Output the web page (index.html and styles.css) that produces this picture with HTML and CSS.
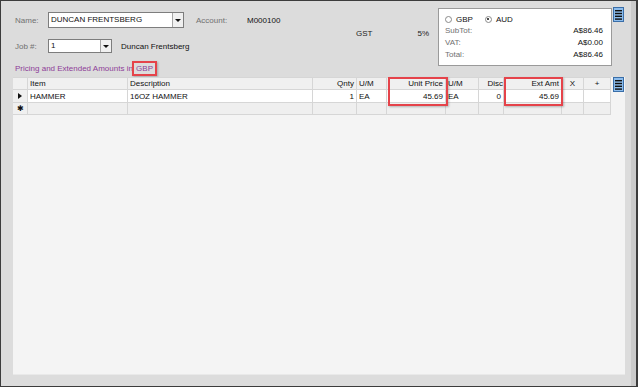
FILE: index.html
```html
<!DOCTYPE html>
<html lang="en">
<head>
  <meta charset="UTF-8">
  <title>Sales Order</title>
  <link rel="stylesheet" href="styles.css">
</head>
<body>
  <div class="window">

    <!-- Header fields and totals -->
    <div class="top">
      <div class="form">
        <div class="form-row name-row">
          <span class="label">Name:</span>
          <div class="combo name-combo">
            <span class="combo-text">DUNCAN FRENTSBERG</span>
            <span class="combo-btn"><span class="arrow"></span></span>
          </div>
          <span class="label account-label">Account:</span>
          <span class="value">M000100</span>
        </div>
        <div class="form-row job-row">
          <span class="label">Job #:</span>
          <div class="combo job-combo">
            <span class="combo-text">1</span>
            <span class="combo-btn"><span class="arrow"></span></span>
          </div>
          <span class="value job-name">Duncan Frentsberg</span>
        </div>
        <div class="caption">Pricing and Extended Amounts in <span class="mark">GBP</span></div>
      </div>

      <div class="tax">
        <span>GST</span>
        <span>5%</span>
      </div>

      <div class="totals">
        <div class="currency">
          <span class="radio"></span><span class="radio-label">GBP</span>
          <span class="radio checked"></span><span class="radio-label">AUD</span>
        </div>
        <div class="total-row"><span class="label">SubTot:</span><span>A$86.46</span></div>
        <div class="total-row"><span class="label">VAT:</span><span>A$0.00</span></div>
        <div class="total-row"><span class="label">Total:</span><span>A$86.46</span></div>
      </div>

      <svg class="menu-btn top-menu" width="11" height="15" viewBox="0 0 11 15">
        <rect x="0.5" y="0.5" width="10" height="14" fill="#8cbcec" stroke="#3a6ea8"/>
        <rect x="2" y="3" width="7" height="1.4" fill="#111"/>
        <rect x="2" y="5.8" width="7" height="1.4" fill="#111"/>
        <rect x="2" y="8.6" width="7" height="1.4" fill="#111"/>
        <rect x="2" y="11.4" width="7" height="1.4" fill="#111"/>
      </svg>
    </div>

    <!-- Line items -->
    <div class="grid-area">
      <div class="grid">
        <div class="cell head rowhead"></div>
        <div class="cell head">Item</div>
        <div class="cell head">Description</div>
        <div class="cell head num">Qnty</div>
        <div class="cell head">U/M</div>
        <div class="cell head num">Unit Price</div>
        <div class="cell head">U/M</div>
        <div class="cell head num clip">Disc</div>
        <div class="cell head num">Ext Amt</div>
        <div class="cell head center">X</div>
        <div class="cell head center">+</div>

        <div class="cell rowhead"><span class="current"></span></div>
        <div class="cell data">HAMMER</div>
        <div class="cell data">16OZ HAMMER</div>
        <div class="cell data num">1</div>
        <div class="cell data">EA</div>
        <div class="cell data num">45.69</div>
        <div class="cell data">EA</div>
        <div class="cell data num">0</div>
        <div class="cell data num">45.69</div>
        <div class="cell data"></div>
        <div class="cell data"></div>

        <div class="cell rowhead newrow-mark">&#x2731;</div>
        <div class="cell newrow"></div>
        <div class="cell newrow"></div>
        <div class="cell newrow"></div>
        <div class="cell newrow"></div>
        <div class="cell newrow"></div>
        <div class="cell newrow"></div>
        <div class="cell newrow"></div>
        <div class="cell newrow"></div>
        <div class="cell newrow"></div>
        <div class="cell newrow"></div>

        <!-- annotation boxes over the price columns -->
        <div class="highlight unit-price-mark"></div>
        <div class="highlight ext-amt-mark"></div>
      </div>

      <svg class="menu-btn grid-menu" width="11" height="15" viewBox="0 0 11 15">
        <rect x="0.5" y="0.5" width="10" height="14" fill="#8cbcec" stroke="#3a6ea8"/>
        <rect x="2" y="3" width="7" height="1.4" fill="#111"/>
        <rect x="2" y="5.8" width="7" height="1.4" fill="#111"/>
        <rect x="2" y="8.6" width="7" height="1.4" fill="#111"/>
        <rect x="2" y="11.4" width="7" height="1.4" fill="#111"/>
      </svg>
    </div>
  </div>
</body>
</html>
```

FILE: styles.css
```css
body {
  margin: 0;
  font-family: "Liberation Sans", Arial, sans-serif;
  font-size: 8px;
  color: #111;
}

.window {
  width: 638px;
  height: 387px;
  box-sizing: border-box;
  border: 1px solid #3c3c3c;
  border-right-width: 2px;
  background: #dcdcdc;
  box-shadow: inset -5px 0 0 #cbcbcb;
}

/* Top area */
.top {
  display: flex;
  height: 76px;
}

.form {
  width: 340px;
  padding-left: 14px;
  padding-top: 11px;
  box-sizing: border-box;
}

.form-row {
  display: flex;
  align-items: center;
}

.name-row {
  height: 16px;
}

.job-row {
  height: 14px;
  margin-top: 11px;
}

.label {
  color: #707070;
}

.form-row > .label:first-child {
  width: 33px;
}

.combo {
  display: flex;
  box-sizing: border-box;
  height: 100%;
  border: 1px solid #7d7d7d;
  background: #fff;
}

.name-combo {
  width: 136px;
}

.job-combo {
  width: 64px;
}

.combo-text {
  flex: 1;
  padding-left: 2px;
  line-height: 13px;
}

.job-combo .combo-text {
  line-height: 11px;
}

.combo-btn {
  width: 10px;
  border-left: 1px solid #a6a6a6;
  background: #f0f0f0;
  display: flex;
  align-items: center;
  justify-content: center;
}

.arrow {
  width: 0;
  height: 0;
  border-left: 3px solid transparent;
  border-right: 3px solid transparent;
  border-top: 3px solid #111;
}

.account-label {
  margin-left: 12px;
  width: 51px;
}

.job-name {
  margin-left: 9px;
}

.caption {
  margin-top: 8px;
  height: 14px;
  line-height: 14px;
  color: #8e3c98;
}

.mark {
  display: inline-block;
  box-sizing: border-box;
  height: 15px;
  line-height: 11px;
  padding: 0 2px 0 2px;
  margin-left: -3px;
  border: 2px solid #e5434a;
  box-shadow: 1px 1px 2px rgba(0, 0, 0, 0.25);
}

.tax {
  display: flex;
  justify-content: space-between;
  width: 73px;
  margin-left: 15px;
  margin-right: 9px;
  padding-top: 28px;
  color: #222;
}

.totals {
  width: 174px;
  height: 58px;
  margin-top: 7px;
  box-sizing: border-box;
  border: 1px solid #9a9a9a;
  background: #fff;
  padding: 4px 8px 0 6px;
}

.currency {
  display: flex;
  align-items: center;
  height: 12px;
}

.radio {
  width: 7px;
  height: 7px;
  box-sizing: border-box;
  border: 1px solid #8a8a8a;
  border-radius: 50%;
  background: #fff;
  position: relative;
}

.radio.checked::after {
  content: "";
  position: absolute;
  left: 1.5px;
  top: 1.5px;
  width: 2px;
  height: 2px;
  border-radius: 50%;
  background: #111;
}

.radio-label {
  margin-left: 4px;
  margin-right: 12px;
}

.total-row {
  display: flex;
  justify-content: space-between;
  height: 12px;
  line-height: 12px;
}

.menu-btn {
  display: block;
}

.top-menu {
  margin-top: 6px;
  margin-left: 1px;
}

/* Grid area */
.grid-area {
  display: flex;
  align-items: flex-start;
  margin: 0 11px 0 12px;
  height: 297px;
  background: #f4f4f4;
  border-bottom: 1px solid #e9e9e9;
}

.grid {
  position: relative;
  display: grid;
  grid-template-columns: 15px 100px 185px 44px 30px 59px 33px 25px 58px 22px 27px;
  grid-template-rows: 12px 13px 12px;
  border-top: 1px solid #d6d6d6;
}

.cell {
  box-sizing: border-box;
  border-right: 1px solid #d6d6d6;
  border-bottom: 1px solid #d6d6d6;
  padding: 0 2px;
  white-space: nowrap;
  overflow: hidden;
  display: flex;
  align-items: center;
}

.head {
  background: #f0f0f0;
}

.rowhead {
  background: #f0f0f0;
  justify-content: center;
  padding: 0;
}

.data {
  background: #fff;
}

.newrow {
  background: #efefef;
}

.num {
  justify-content: flex-end;
}

.clip {
  padding-right: 0;
}

.center {
  justify-content: center;
}

.current {
  width: 0;
  height: 0;
  border-top: 3.5px solid transparent;
  border-bottom: 3.5px solid transparent;
  border-left: 4px solid #111;
}

.newrow-mark {
  font-size: 8px;
}

.highlight {
  position: absolute;
  top: -1px;
  height: 29px;
  box-sizing: border-box;
  border: 2px solid #e5434a;
  box-shadow: 1px 1px 2px rgba(0, 0, 0, 0.25);
}

.unit-price-mark {
  left: 375px;
  width: 60px;
}

.ext-amt-mark {
  left: 491px;
  width: 59px;
}

.grid-menu {
  margin-left: 2px;
  margin-top: 0;
}
```
